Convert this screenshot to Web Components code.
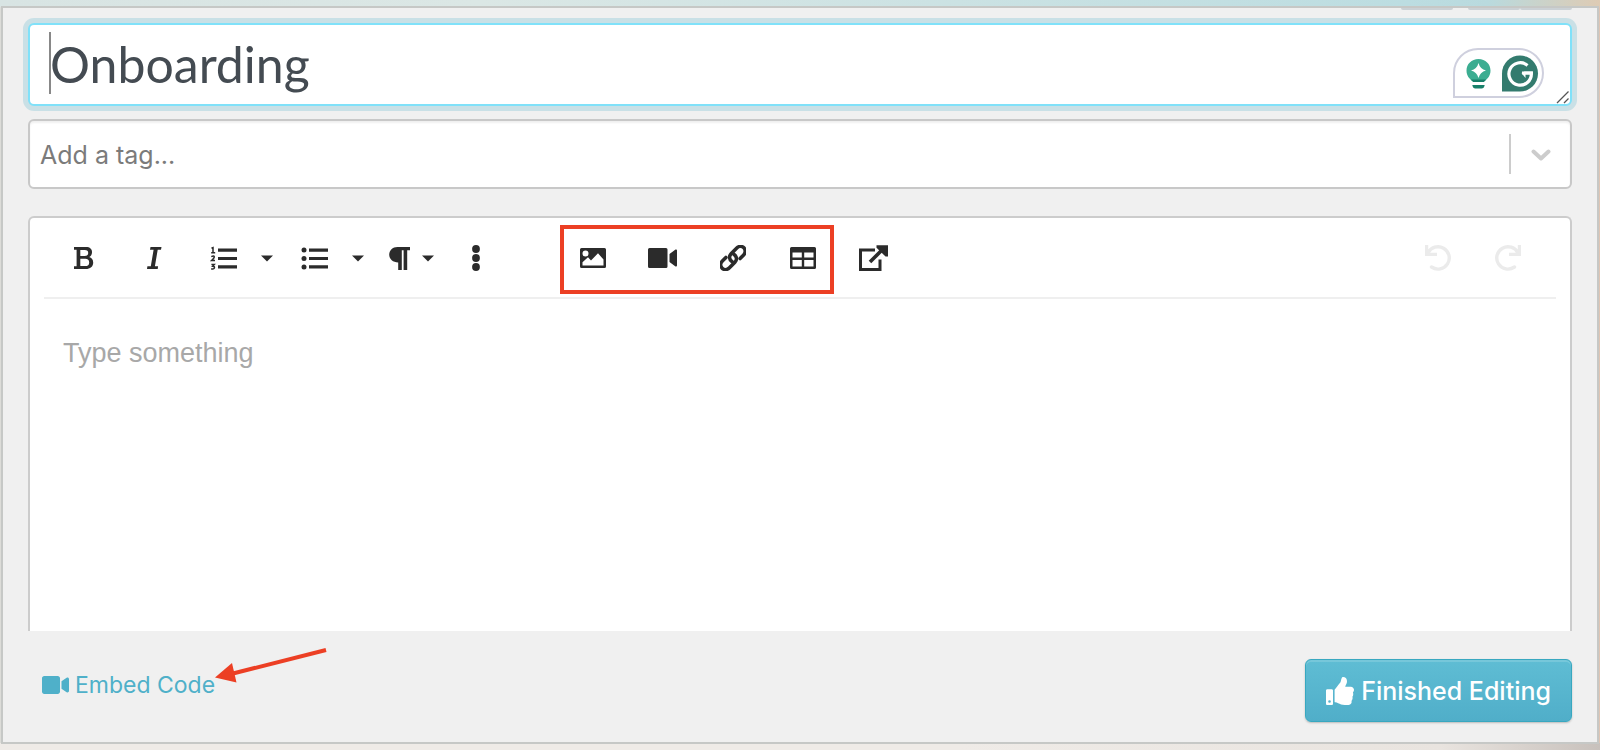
<!DOCTYPE html>
<html lang="en">
<head>
<meta charset="utf-8">
<title>Onboarding</title>
<style>
  * {
    box-sizing: border-box;
  }

  body {
    margin: 0;
    font-family: Inter, "Liberation Sans", sans-serif;
    color: #444b52;
  }
</style>
</head>
<body>
<editor-page></editor-page>

<script>
  const icons = {
    bold: { box: '0 0 24 26', svg: '<path fill-rule="evenodd" d="M2 2h12c4 0 6 2 6 5.300 0 2.200-1 3.800-2.800 4.700 2.500.8 4 2.500 4 5.500 0 4.300-3 6.500-7.500 6.500H2v-2.700h2.600V4.700H2zM8.300 5v6h4.500c2.300 0 3.400-1.100 3.400-3.100S15.100 5 12.800 5zM8.300 13.700v7.400h5c2.500 0 3.900-1.200 3.900-3.700s-1.400-3.700-3.900-3.700z"/>' },
    italic: { box: '0 0 24 26', svg: '<path d="M8.500 2h11l-.5 2.700h-3.300l-2.800 16.600h3.200l-.4 2.700H5l.4-2.700h3.400l2.800-16.600H8z"/>' },
    ol: { box: '0 0 28 26', svg: '<path d="M8 3.500h19v3.200H8zM8 11.900h19v3.200H8zM8 20.300h19v3.200H8z"/><path fill="none" stroke="currentColor" stroke-width="1.500" d="M1.500 3.300 3 2.600v4.800M1.200 7.700h4M1.300 11.600q3-1.600 3 .4 0 1-2.700 3.500h3.400M1.400 19.400h2.900l-1.600 1.900q2 0 1.700 1.500-.4 1.700-3.200.9"/>' },
    ul: { box: '0 0 28 26', svg: '<circle cx="3" cy="5" r="2.500"/><circle cx="3" cy="13.500" r="2.500"/><circle cx="3" cy="22" r="2.500"/><path d="M8 3.500h19v3.200H8zM8 11.900h19v3.200H8zM8 20.300h19v3.200H8z"/>' },
    paragraph: { box: '0 0 21 26', svg: '<path d="M8.500 2H21v3.300h-2.800V25h-3.600V5.300h-1.800V25H9.200v-7.500C4 17.500.2 14.200.2 9.800S3.500 2 8.500 2z"/>' },
    more: { box: '0 0 24 28', svg: '<circle cx="12" cy="5" r="3.900"/><circle cx="12" cy="14" r="3.900"/><circle cx="12" cy="23" r="3.900"/>' },
    image: { box: '0 0 26 26', svg: '<path fill-rule="evenodd" d="M1.500 3h23q1.500 0 1.500 1.500v17q0 1.500-1.500 1.500h-23Q0 23 0 21.500v-17Q0 3 1.500 3zM5.500 5.500a3 3 0 1 0 0 6 3 3 0 0 0 0-6zM2.500 20.500h21v-6L18 8.300l-7 7.200-3-3.200-5.500 5z"/>' },
    video: { box: '0 0 30 26', svg: '<path d="M1.500 3h16.500q1.500 0 1.500 1.500v17q0 1.500-1.500 1.500H1.500Q0 23 0 21.500v-17Q0 3 1.500 3zM21.500 9l6-4.400q1.500-.5 1.500 1v14.800q0 1.500-1.500 1l-6-4.400z"/>' },
    link: { box: '3 3 22 22', size: [26, 26], svg: '<g fill="none" stroke="currentColor" stroke-width="3" stroke-linecap="round"><path d="M13.300 17.200c-2.800-2-2.800-4.800-.9-6.800l4.600-4.700c2-2 4.700-1.800 6.200-.3 1.600 1.600 1.500 4.300-.2 6l-3 3.100"/><path d="M14.700 10.800c2.800 2 2.800 4.800.9 6.800l-4.600 4.700c-2 2-4.700 1.800-6.200.3-1.600-1.600-1.500-4.300.2-6l3-3.100"/></g>' },
    table: { box: '0 0 26 26', svg: '<path fill-rule="evenodd" d="M1.500 2h23Q26 2 26 3.500v19q0 1.500-1.500 1.500h-23Q0 24 0 22.500v-19Q0 2 1.500 2zM2.500 7.500v5h9.300v-5zm11.700 0v5h9.300v-5zM2.500 15v6.500h9.300V15zm11.700 0v6.500h9.300V15z"/>' },
    external: { box: '0 0 30 28', svg: '<path fill="none" stroke="currentColor" stroke-width="3" d="M17 6H2.500v19.500H22V15.500"/><path fill="none" stroke="currentColor" stroke-width="3.600" d="M12 18 26 4"/><path d="M18.500 1.200H30V12.500h-2.500L18.500 3.700z"/>' },
    undo: { box: '0 0 28 28', svg: '<path fill="none" stroke="currentColor" stroke-width="3.400" stroke-linecap="round" d="M4 9A11.200 11.200 0 1 1 7.500 23"/><path d="M1 1h3.200v4.500L7 7l-2 1.800h8V12H1z"/>' },
    redo: { box: '0 0 28 28', svg: '<path fill="none" stroke="currentColor" stroke-width="3.400" stroke-linecap="round" d="M24 9A11.200 11.200 0 1 0 20.500 23"/><path d="M27 1h-3.200v4.500L21 7l2 1.800h-8V12h12z"/>' },
    caret: { box: '0 0 12 26', svg: '<path d="M0 10.500h12L6 16.500z"/>' },
    chevron: { box: '0 0 20 26', svg: '<path fill="none" stroke="currentColor" stroke-width="4" stroke-linecap="round" stroke-linejoin="round" d="m2.500 10.500 7.500 7 7.500-7"/>' },
    camera: { box: '0 64 576 384', svg: '<path d="M336.200 64H47.800C21.400 64 0 85.400 0 111.800v288.400C0 426.600 21.400 448 47.800 448h288.400c26.400 0 47.800-21.400 47.800-47.800V111.800c0-26.400-21.400-47.800-47.800-47.800zm189.400 37.700L416 177.300v157.400l109.600 75.500c21.200 14.600 50.400-.3 50.400-25.800V127.500c0-25.400-29.100-40.400-50.400-25.800z"/>' },
    thumb: { box: '0 0 512 512', svg: '<path fill-rule="evenodd" d="M104 224H24c-13.300 0-24 10.700-24 24v240c0 13.300 10.700 24 24 24h80c13.300 0 24-10.700 24-24V248c0-13.300-10.700-24-24-24zM64 472a24 24 0 1 1 0-48 24 24 0 0 1 0 48zM384 81.500c0 42.400-26 66.200-33.300 94.500h101.700c33.400 0 59.400 27.700 59.600 58.100.1 18-7.600 37.300-19.600 49.300l-.1.100c9.900 23.400 8.200 56.300-9.400 79.800 8.700 25.900-.1 57.700-16.500 74.800 4.300 17.600 2.300 32.600-6.200 44.700C439.600 512.300 388.600 512 345.500 512h-2.900c-48.700 0-88.500-17.700-120.500-32-16.100-7.100-37.100-16-53.100-16.300-6.600-.1-11.900-5.500-11.900-12V238c0-3.200 1.300-6.300 3.600-8.500 39.600-39.100 56.600-80.600 89.100-113.100 14.800-14.800 20.200-37.200 25.400-58.900C279.500 39 288.800 0 308.900 0c24 0 75.100 8 75.100 81.500z"/>' }
  };

  class EditorIcon extends HTMLElement {
    connectedCallback () {
      const icon = icons[this.getAttribute('name')];
      this.attachShadow({ mode: 'open' }).innerHTML =
      /*html*/`
      <style>
        :host{
          display: inline-flex;
          flex: none;
          width: var(--icon-width, 28px);
          height: var(--icon-height, 28px);
        }

        svg{
          width: 100%;
          height: 100%;
          fill: currentColor;
        }
      </style>
      <svg viewBox="${icon.box}" aria-hidden="true">${icon.svg}</svg>
      `;
    }
  }

  class ToolButton extends HTMLElement {
    connectedCallback () {
      const name = this.getAttribute('icon');
      const [width, height] = icons[name].size || icons[name].box.split(' ').slice(2);
      this.attachShadow({ mode: 'open' }).innerHTML =
      /*html*/`
      <style>
        :host{
          display: flex;
          width: 70px;
          height: 79px;
        }

        :host([icon="caret"]){
          width: 16px;
          margin-right: 5px;
        }

        :host([dropdown]) button{
          padding-left: 10px;
        }

        button{
          display: flex;
          flex: 1;
          align-items: center;
          justify-content: center;
          gap: 12px;
          padding: 0;
          border: none;
          background: transparent;
          color: #2b2b2b;
          cursor: pointer;
        }

        button:disabled{
          color: #ebebeb;
        }

        .main{
          --icon-width: ${width}px;
          --icon-height: ${height}px;
        }

        .drop{
          --icon-width: 12px;
          --icon-height: 26px;
        }
      </style>
      <button type="button" aria-label="${this.getAttribute('label')}" ${this.hasAttribute('disabled') ? 'disabled' : ''}>
        <editor-icon class="main" name="${name}"></editor-icon>
        ${this.hasAttribute('dropdown') ? '<editor-icon class="drop" name="caret"></editor-icon>' : ''}
      </button>
      `;
    }
  }

  class HighlightBox extends HTMLElement {
    connectedCallback () {
      this.attachShadow({ mode: 'open' }).innerHTML =
      /*html*/`
      <style>
        :host{
          display: flex;
          position: relative;
        }

        .frame{
          position: absolute;
          inset: 7px 4px 3px 2px;
          border: 4px solid #ec3f24;
          pointer-events: none;
        }
      </style>
      <slot></slot>
      <div class="frame"></div>
      `;
    }
  }

  class TitleField extends HTMLElement {
    connectedCallback () {
      this.attachShadow({ mode: 'open' }).innerHTML =
      /*html*/`
      <style>
        :host{
          display: block;
          position: relative;
          border: 2px solid #80e1f9;
          border-radius: 6px;
          background: #fff;
          box-shadow: 0 0 0 5px #c9e0e6;
        }

        textarea{
          display: block;
          box-sizing: border-box;
          width: 100%;
          height: 79px;
          padding: 7px 120px 6px 20px;
          border: none;
          outline: none;
          resize: none;
          overflow: hidden;
          background: transparent;
          color: #444b52;
          font: 50px/64px Lato, sans-serif;
        }

        .cursor{
          position: absolute;
          left: 19px;
          top: 7px;
          width: 2px;
          height: 62px;
          background: #888;
        }

        .assistant{
          position: absolute;
          right: 25px;
          bottom: 6px;
          width: 92px;
          height: 50px;
        }

        .grip{
          position: absolute;
          right: 0;
          bottom: 0;
          width: 14px;
          height: 14px;
        }
      </style>
      <textarea aria-label="Title" rows="1" spellcheck="false">${this.getAttribute('value')}</textarea>
      <span class="cursor"></span>
      <svg class="assistant" viewBox="0 0 92 50" aria-hidden="true">
        <path fill="#fff" stroke="#cfd0de" stroke-width="2" d="M1 49V25A24 24 0 0 1 25 1h41a24 24 0 0 1 0 48z"/>
        <path fill="#3bad91" d="M25.500 11c7 0 12 5.200 12 11.500 0 5.500-3 8-5.500 10.500H19c-2.500-2.500-5.500-5-5.500-10.500 0-6.300 5-11.500 12-11.500z"/>
        <path fill="#fff" d="M25.500 15q1.500 6 7.500 7.500-6 1.500-7.500 7.500-1.500-6-7.500-7.500 6-1.500 7.500-7.500z"/>
        <path fill="#18806a" d="M18 31.500h15l-2 2.500H20zM19.300 37h12.400c-.4 2.500-1.500 3.500-3 3.500h-6.400c-1.500 0-2.600-1-3-3.500z"/>
        <path fill="#337b6e" d="M49 43.500V25.500a18 18 0 1 1 18 18z"/>
        <path fill="none" stroke="#fff" stroke-width="3.200" d="M74.500 17.500A11.200 11.200 0 1 0 78.300 25H69"/>
        <path fill="#fff" d="m68.500 25 3-1.600H80v3.200h-7.500V30z"/>
      </svg>
      <svg class="grip" viewBox="0 0 14 14" aria-hidden="true">
        <path fill="none" stroke="#555" stroke-width="1.300" d="M1 13 12.500 1.500M8 13l4.500-4.500"/>
      </svg>
      `;
    }
  }

  class TagField extends HTMLElement {
    connectedCallback () {
      this.attachShadow({ mode: 'open' }).innerHTML =
      /*html*/`
      <style>
        :host{
          display: flex;
          align-items: center;
          height: 70px;
          box-sizing: border-box;
          border: 2px solid #c8c8c8;
          border-radius: 6px;
          background: #fff;
          box-shadow: inset 0 2px 2px #f0f0f0;
        }

        input{
          flex: 1;
          min-width: 0;
          padding: 2px 10px 0;
          border: none;
          outline: none;
          background: transparent;
          font: 25px/32px Inter, sans-serif;
        }

        input::placeholder{
          color: #7b7b7b;
          opacity: 1;
        }

        button{
          display: flex;
          align-items: center;
          justify-content: center;
          width: 61px;
          height: 40px;
          padding: 0;
          border: none;
          border-left: 2px solid #ccc;
          background: transparent;
          color: #ccc;
          --icon-width: 20px;
          --icon-height: 26px;
        }
      </style>
      <input type="text" aria-label="Tags" placeholder="${this.getAttribute('placeholder')}">
      <button type="button" aria-label="Show tags"><editor-icon name="chevron"></editor-icon></button>
      `;
    }
  }

  class RichEditor extends HTMLElement {
    connectedCallback () {
      this.attachShadow({ mode: 'open' }).innerHTML =
      /*html*/`
      <style>
        :host{
          display: flex;
          flex-direction: column;
          border: 2px solid #ccc;
          border-bottom: none;
          border-radius: 6px 6px 0 0;
          background: #fff;
        }

        .toolbar{
          display: flex;
          margin: 0 14px;
          padding: 0 13px 0 5px;
          border-bottom: 2px solid #efefef;
        }

        .insert{
          display: flex;
          margin-left: 47px;
        }

        .history{
          display: flex;
          margin-left: auto;
        }

        textarea{
          flex: 1;
          min-height: 200px;
          padding: 36px 33px;
          border: none;
          outline: none;
          resize: none;
          background: transparent;
          font: 27px/36px "Liberation Sans", sans-serif;
        }

        textarea::placeholder{
          color: #a8a8a8;
          opacity: 1;
        }
      </style>
      <div class="toolbar" role="toolbar" aria-label="Formatting">
        <tool-button icon="bold" label="Bold"></tool-button>
        <tool-button icon="italic" label="Italic"></tool-button>
        <tool-button icon="ol" label="Ordered list"></tool-button>
        <tool-button icon="caret" label="Ordered list options"></tool-button>
        <tool-button icon="ul" label="Unordered list"></tool-button>
        <tool-button icon="caret" label="Unordered list options"></tool-button>
        <tool-button icon="paragraph" label="Paragraph format" dropdown></tool-button>
        <tool-button icon="more" label="More"></tool-button>
        <div class="insert">
          <highlight-box>
            <tool-button icon="image" label="Insert image"></tool-button>
            <tool-button icon="video" label="Insert video"></tool-button>
            <tool-button icon="link" label="Insert link"></tool-button>
            <tool-button icon="table" label="Insert table"></tool-button>
          </highlight-box>
          <tool-button icon="external" label="Open"></tool-button>
        </div>
        <div class="history">
          <tool-button icon="undo" label="Undo" disabled></tool-button>
          <tool-button icon="redo" label="Redo" disabled></tool-button>
        </div>
      </div>
      <textarea aria-label="Content" placeholder="${this.getAttribute('placeholder')}"></textarea>
      `;
    }
  }

  class EmbedLink extends HTMLElement {
    connectedCallback () {
      this.attachShadow({ mode: 'open' }).innerHTML =
      /*html*/`
      <style>
        :host{
          display: block;
          position: relative;
        }

        a{
          display: flex;
          align-items: center;
          gap: 6px;
          color: #4fb0c9;
          font-size: 23px;
          line-height: 32px;
          text-decoration: none;
          --icon-width: 27px;
          --icon-height: 18px;
        }

        .arrow{
          position: absolute;
          left: 100%;
          bottom: 18px;
          width: 112px;
          height: 36px;
        }
      </style>
      <a href="#embed"><editor-icon name="camera"></editor-icon><slot></slot></a>
      <svg class="arrow" viewBox="0 0 112 36" aria-hidden="true">
        <path fill="none" stroke="#ec3f24" stroke-width="4" d="M16 27 111 3"/>
        <path fill="#ec3f24" d="M0 30.500 17 16l4.500 19.500z"/>
      </svg>
      `;
    }
  }

  class PrimaryButton extends HTMLElement {
    connectedCallback () {
      this.attachShadow({ mode: 'open' }).innerHTML =
      /*html*/`
      <style>
        :host{
          display: block;
        }

        button{
          display: flex;
          align-items: center;
          gap: 7px;
          height: 63px;
          padding: 0 20px;
          border: 1px solid #38a8c0;
          border-radius: 6px;
          background: linear-gradient(#5fbdd4, #50aec9);
          box-shadow: inset 0 2px 0 #76c7da, 0 1px 2px #bbb;
          color: #fff;
          font: 500 25px/32px Inter, sans-serif;
          cursor: pointer;
          --icon-width: 28px;
          --icon-height: 28px;
        }
      </style>
      <button type="button"><editor-icon name="thumb"></editor-icon><slot></slot></button>
      `;
    }
  }

  class EditorPage extends HTMLElement {
    connectedCallback () {
      this.attachShadow({ mode: 'open' }).innerHTML =
      /*html*/`
      <style>
        :host{
          display: flex;
          box-sizing: border-box;
          min-height: 100vh;
          padding: 6px 1px;
          background:
            linear-gradient(90deg, #d8e4e3, #dbe7e5 30%, #bcdde1 88%, #b9dade 93%, #decbb4) top / 100% 7px no-repeat,
            linear-gradient(90deg, #efebe7 60%, #e9e4df 90%, #c8c1bc) bottom / 100% 7px no-repeat,
            linear-gradient(90deg, #dcdcd8 50%, #dfc5b4 50%);
        }

        main{
          display: flex;
          flex-direction: column;
          flex: 1;
          box-sizing: border-box;
          min-width: 0;
          padding: 0 25px 20px;
          border: 2px solid #c6c8c6;
          background: #f0f0f0;
        }

        /* bottoms of the page buttons scrolled out above */
        .scrolled{
          display: flex;
          justify-content: flex-end;
          height: 2px;
          margin-bottom: 13px;
        }

        .scrolled span{
          width: 52px;
          border-radius: 0 0 6px 6px;
          background: #cbd1d5;
        }

        .scrolled span:first-child{
          margin-right: 15px;
        }

        tag-field{
          margin: 13px 0 27px;
        }

        rich-editor{
          flex: 1;
        }

        footer{
          display: flex;
          align-items: center;
          justify-content: space-between;
          margin-top: 28px;
          padding-left: 14px;
        }

        embed-link{
          margin-bottom: 12px;
        }
      </style>
      <main>
        <div class="scrolled"><span></span><span></span><span></span></div>
        <title-field value="Onboarding"></title-field>
        <tag-field placeholder="Add a tag..."></tag-field>
        <rich-editor placeholder="Type something"></rich-editor>
        <footer>
          <embed-link>Embed Code</embed-link>
          <primary-button>Finished Editing</primary-button>
        </footer>
      </main>
      `;
    }
  }

  customElements.define('editor-icon', EditorIcon);
  customElements.define('tool-button', ToolButton);
  customElements.define('highlight-box', HighlightBox);
  customElements.define('title-field', TitleField);
  customElements.define('tag-field', TagField);
  customElements.define('rich-editor', RichEditor);
  customElements.define('embed-link', EmbedLink);
  customElements.define('primary-button', PrimaryButton);
  customElements.define('editor-page', EditorPage);
</script>
</body>
</html>
